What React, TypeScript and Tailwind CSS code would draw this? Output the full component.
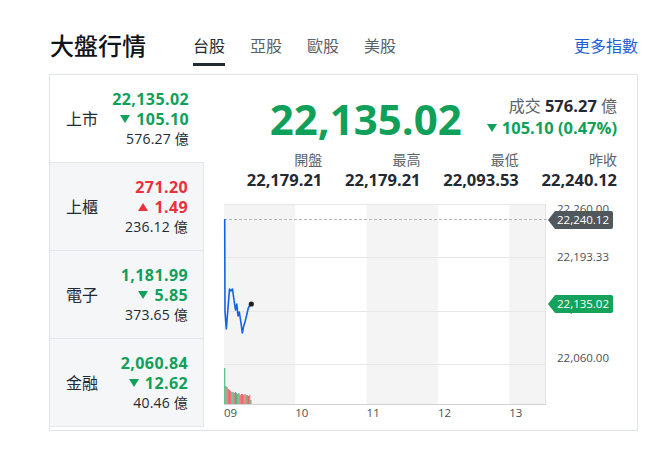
import clsx from 'clsx'

type Index = {
  name: string
  price: string
  change: string
  volume: string
  up: boolean
}

const INDICES: Index[] = [
  { name: '上市', price: '22,135.02', change: '105.10', volume: '576.27', up: false },
  { name: '上櫃', price: '271.20', change: '1.49', volume: '236.12', up: true },
  { name: '電子', price: '1,181.99', change: '5.85', volume: '373.65', up: false },
  { name: '金融', price: '2,060.84', change: '12.62', volume: '40.46', up: false },
]

const STATS = [
  { label: '開盤', value: '22,179.21' },
  { label: '最高', value: '22,179.21' },
  { label: '最低', value: '22,093.53' },
  { label: '昨收', value: '22,240.12' },
]

// intraday line, in plot coordinates (x: px from 09:00, y: px from top)
const LINE = [
  [0.7, 15], [1, 108], [2.3, 125], [3.5, 110], [5.5, 85], [7, 87], [8.5, 85], [10, 96],
  [11.5, 106], [12.8, 100], [14, 112], [15.3, 108], [17, 119], [18.3, 129], [19.7, 122],
  [21, 118], [22.7, 111], [24.3, 104], [26, 101], [27.3, 100],
]

// volume per minute: [height, up]
const VOLUME: [number, boolean][] = [
  [36, false], [18, false], [17, true], [15, true], [14, false], [13, true], [12, false],
  [12, false], [11, true], [12, false], [11, false], [10, true], [11, false], [9, true],
  [10, true], [10, true], [9, true], [10, true], [9, false], [9, true], [8, true], [9, true],
  [4, false],
]

const PRICE_TICKS = [
  { label: '22,260.00', top: 'top-[-3px]' },
  { label: '22,193.33', top: 'top-[45px]' },
  { label: '22,126.67', top: 'top-[97px]' },
  { label: '22,060.00', top: 'top-[146px]' },
]

function Triangle({ up }: { up: boolean }) {
  return (
    <svg width="10" height="8" viewBox="0 0 10 8" fill="currentColor" className="shrink-0">
      {up ? <path d="M5 0L10 8H0z" /> : <path d="M0 0h10L5 8z" />}
    </svg>
  )
}

function PriceTag({ value, className }: { value: string; className: string }) {
  return (
    <div className={clsx('absolute left-[2px] flex h-[18px] items-stretch', className)}>
      <svg width="7" height="18" viewBox="0 0 7 18" fill="currentColor" className="shrink-0">
        <path d="M7 0L0 9l7 9z" />
      </svg>
      <div className="flex items-center rounded-r-[2px] bg-current pl-[2px] pr-[4px]">
        <span className="text-[11.5px] leading-[18px] text-white">{value}</span>
      </div>
    </div>
  )
}

function IndexRow({ item, active }: { item: Index; active: boolean }) {
  const color = item.up ? 'text-[#eb2f3b]' : 'text-[#0fa05a]'
  return (
    <div
      className={clsx(
        'flex h-[88px] items-center justify-between border-b border-[#e3e6ea] pl-[16px] pr-[15px]',
        active ? 'bg-white' : 'border-r bg-[#f5f6f8]'
      )}
    >
      <span className="text-[16px] leading-[24px] text-[#232a31]">{item.name}</span>
      <div className="flex flex-col items-end">
        <div className={clsx('text-[16px] font-bold leading-[20px] tracking-[0.4px]', color)}>{item.price}</div>
        <div className={clsx('flex items-center gap-[6px] text-[16px] font-bold leading-[20px] tracking-[0.4px]', color)}>
          <Triangle up={item.up} />
          {item.change}
        </div>
        <div className="text-[14px] leading-[20px] tracking-[0.2px] text-[#232a31]">{item.volume} 億</div>
      </div>
    </div>
  )
}

function Chart() {
  return (
    <div className="mt-[14px] flex">
      <div className="w-[322px] shrink-0">
        <svg width="322" height="201" viewBox="0 0 322 201" className="block overflow-visible">
          <rect x="0" y="0" width="71.3" height="200" fill="#f4f4f5" />
          <rect x="142.6" y="0" width="71.3" height="200" fill="#f4f4f5" />
          <rect x="285.2" y="0" width="35.8" height="200" fill="#f4f4f5" />
          {[0.5, 53.5, 107.5, 160.5].map((y) => (
            <line key={y} x1="0" x2="321" y1={y} y2={y} stroke="#e6e7e9" strokeWidth="1" />
          ))}
          <line x1="321.5" x2="321.5" y1="0" y2="200" stroke="#e3e4e6" strokeWidth="1" />
          <line x1="0" x2="324" y1="15.5" y2="15.5" stroke="#b4b6b8" strokeWidth="1" strokeDasharray="3 2" />
          {VOLUME.map(([h, up], i) => (
            <rect
              key={i}
              x={i * 1.19 + 0.2}
              y={200 - h}
              width="1.1"
              height={h}
              fill={up ? '#f0525a' : '#2fae6c'}
              opacity="0.9"
            />
          ))}
          <line x1="0" x2="322" y1="200.5" y2="200.5" stroke="#cfd3d6" strokeWidth="1" />
          <polyline
            points={LINE.map(([x, y]) => `${x},${y}`).join(' ')}
            fill="none"
            stroke="#1163e6"
            strokeWidth="1.6"
            strokeLinejoin="round"
          />
          <circle cx="27.3" cy="100" r="2.6" fill="#1d1f21" />
        </svg>
        <div className="grid grid-cols-[71.3px_71.3px_71.3px_71.3px_1fr] text-[11.5px] leading-[16px] text-[#4b5258]">
          <span>09</span>
          <span>10</span>
          <span>11</span>
          <span>12</span>
          <span>13</span>
        </div>
      </div>
      <div className="relative flex-1">
        {PRICE_TICKS.map((t) => (
          <span key={t.label} className={clsx('absolute left-[11px] text-[11.5px] leading-[16px] text-[#4b5258]', t.top)}>
            {t.label}
          </span>
        ))}
        <PriceTag value="22,240.12" className="top-[7px] text-[#50575d]" />
        <PriceTag value="22,135.02" className="top-[91px] text-[#13a35b]" />
      </div>
    </div>
  )
}

export default function App() {
  return (
    <div className="min-h-screen bg-white font-['Open_Sans','Noto_Sans_CJK_TC',sans-serif]">
      <div className="ml-[49px] w-[589px] pt-[30px]">
        <header className="mb-[8px] flex items-start">
          <h1 className="ml-[1px] text-[24px] font-medium leading-[32px] text-[#101418]">大盤行情</h1>
          <nav className="ml-[47px] flex gap-[25px] pt-[4px]">
            <span className="border-b-[3px] border-[#232a31] pb-[5px] text-[16px] leading-[24px] text-[#232a31]">台股</span>
            <span className="pb-[8px] text-[16px] leading-[24px] text-[#5b636a]">亞股</span>
            <span className="pb-[8px] text-[16px] leading-[24px] text-[#5b636a]">歐股</span>
            <span className="pb-[8px] text-[16px] leading-[24px] text-[#5b636a]">美股</span>
          </nav>
          <span className="ml-auto pt-[4px] text-[16px] leading-[24px] text-[#1f5fd6]">更多指數</span>
        </header>

        <section className="flex border border-[#e0e4e9]">
          <div className="flex w-[154px] shrink-0 flex-col">
            {INDICES.map((item, i) => (
              <IndexRow key={item.name} item={item} active={i === 0} />
            ))}
          </div>

          <div className="flex-1 pb-[9px] pl-[20px] pr-[20px] pt-[20px]">
            <div className="flex h-[48px] items-start justify-end gap-[25px]">
              <span className="text-[42px] font-bold leading-[48px] text-[#0fa05a]">22,135.02</span>
              <div className="flex flex-col items-end">
                <div className="text-[16px] leading-[22px]">
                  <span className="text-[#5b636a]">成交</span>{' '}
                  <span className="text-[16.5px] font-bold text-[#232a31]">576.27</span>{' '}
                  <span className="text-[#5b636a]">億</span>
                </div>
                <div className="flex items-center gap-[5px] text-[16.5px] font-bold leading-[22px] text-[#0fa05a]">
                  <Triangle up={false} />
                  105.10 (0.47%)
                </div>
              </div>
            </div>

            <div className="mt-[7px] grid grid-cols-4">
              {STATS.map((s) => (
                <div key={s.label} className="flex flex-col items-end">
                  <span className="text-[14px] leading-[20px] text-[#5b636a]">{s.label}</span>
                  <span className="text-[16.5px] font-bold leading-[20px] text-[#232a31]">{s.value}</span>
                </div>
              ))}
            </div>

            <Chart />
          </div>
        </section>
      </div>
    </div>
  )
}
